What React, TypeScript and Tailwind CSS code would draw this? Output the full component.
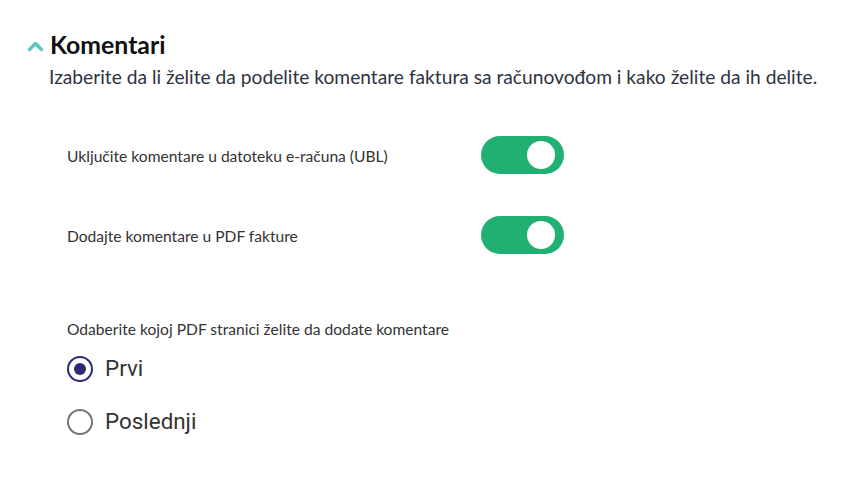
import { useState } from 'react';

function Toggle({ checked, onChange }: { checked: boolean; onChange: () => void }) {
    return (
        <button
            onClick={onChange}
            className={`relative w-[83px] h-[38px] rounded-full transition-colors ${checked ? 'bg-[#20b072]' : 'bg-gray-300'}`}
        >
            <span
                className={`absolute top-[5px] w-[28px] h-[28px] rounded-full bg-white transition-all ${checked ? 'left-[46px]' : 'left-[8px]'}`}
            />
        </button>
    );
}

function Radio({ label, checked, onClick }: { label: string; checked: boolean; onClick: () => void }) {
    return (
        <label onClick={onClick} className="flex items-center gap-[12px] cursor-pointer h-[26px]">
            <span
                className={`flex items-center justify-center w-[26px] h-[26px] rounded-full border-2 ${checked ? 'border-[#2b2a72]' : 'border-[#757575]'}`}
            >
                {checked && <span className="w-[12px] h-[12px] rounded-full bg-[#2b2a72]" />}
            </span>
            <span className="font-['Roboto'] text-[22.4px] text-[#333]">{label}</span>
        </label>
    );
}

export default function App() {
    const [ubl, setUbl] = useState(true);
    const [pdf, setPdf] = useState(true);
    const [page, setPage] = useState<'first' | 'last'>('first');

    return (
        <div className="w-[845px] h-[489px] bg-white font-['Lato',sans-serif] pt-[30px]">
            <div className="flex items-center pl-[27px] gap-[6px]">
                <svg width="17" height="12" viewBox="0 0 17 12" className="mt-[1px]">
                    <path d="M2.5 9.5 L8.5 3.5 L14.5 9.5" fill="none" stroke="#5cc6c0" strokeWidth="3.4" strokeLinecap="round" strokeLinejoin="round" />
                </svg>
                <h2 className="text-[24.8px] font-bold text-[#111] leading-[30px]">Komentari</h2>
            </div>
            <p className="pl-[49px] mt-[4px] text-[19.2px] text-[#2d3340] leading-[26px]">
                Izaberite da li želite da podelite komentare faktura sa računovođom i kako želite da ih delite.
            </p>

            <div className="pl-[67px] mt-[46px] w-[564px]">
                <div className="flex items-center justify-between h-[38px]">
                    <span className="text-[15.6px] text-[#333] pt-[4px]">Uključite komentare u datoteku e-računa (UBL)</span>
                    <Toggle checked={ubl} onChange={() => setUbl(!ubl)} />
                </div>
                <div className="flex items-center justify-between h-[38px] mt-[42px]">
                    <span className="text-[15.6px] text-[#333] pt-[4px]">Dodajte komentare u PDF fakture</span>
                    <Toggle checked={pdf} onChange={() => setPdf(!pdf)} />
                </div>
            </div>

            <div className="pl-[67px] mt-[65px]">
                <p className="text-[15.6px] text-[#333] leading-[20px]">Odaberite kojoj PDF stranici želite da dodate komentare</p>
                <div className="mt-[17px] flex flex-col gap-[27px]">
                    <Radio label="Prvi" checked={page === 'first'} onClick={() => setPage('first')} />
                    <Radio label="Poslednji" checked={page === 'last'} onClick={() => setPage('last')} />
                </div>
            </div>
        </div>
    );
}
